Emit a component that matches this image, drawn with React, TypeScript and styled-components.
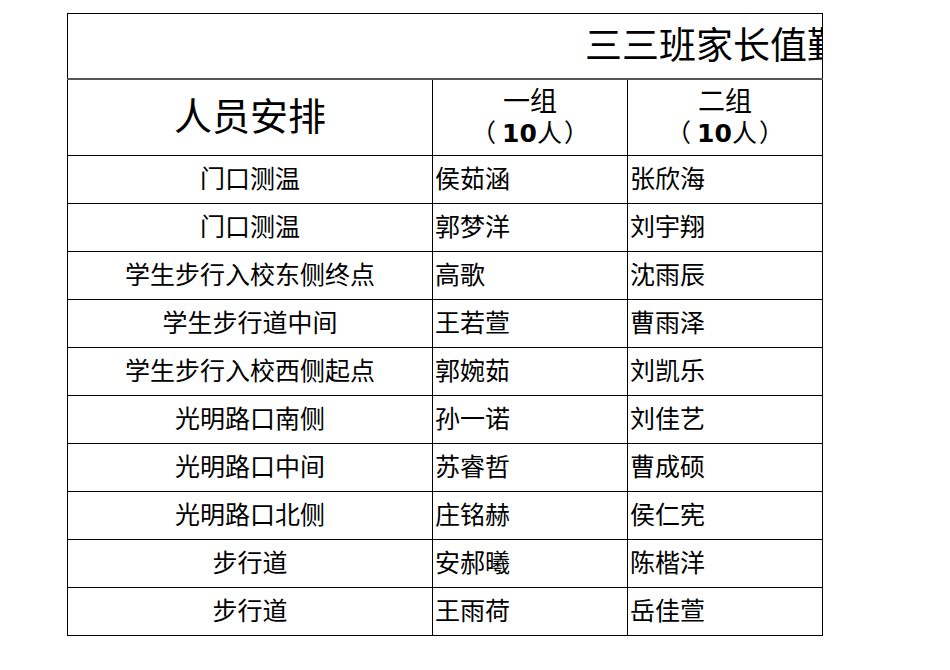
import React from 'react';
import styled, { createGlobalStyle } from 'styled-components';

const GlobalStyle = createGlobalStyle`
  html, body {
    margin: 0;
    padding: 0;
    background: #ffffff;
  }
  body {
    font-family: "DejaVu Sans", "Noto Sans CJK SC", sans-serif;
    color: #000;
  }
`;

const Page = styled.div`
  padding: 13px 0 0 67px;
`;

const Sheet = styled.table`
  border-collapse: collapse;
  table-layout: fixed;
  width: 756px;
`;

const TitleCell = styled.td`
  height: 62px;
  padding: 0;
  border: 1px solid #000;
  border-bottom: 2px solid #555;
  overflow: hidden;
`;

const TitleText = styled.div`
  width: 754px;
  overflow: hidden;
  white-space: nowrap;
  padding-left: 517px;
  box-sizing: border-box;
  font-size: 37px;
  line-height: 62px;
  padding-top: 2px;
`;

const HeadCell = styled.td<{ $big?: boolean }>`
  height: 75px;
  padding: 0;
  border: 1px solid #000;
  text-align: center;
  vertical-align: middle;
  font-size: ${p => (p.$big ? '38px' : '27px')};
  line-height: ${p => (p.$big ? '1.1' : '31px')};
`;

const Count = styled.span`
  font-size: 25px;
  b {
    font-weight: 700;
  }
`;

const OpenParen = styled.span`
  display: inline-block;
  margin-right: 6px;
`;

const CloseParen = styled.span`
  display: inline-block;
  margin-left: 2px;
`;

const Cell = styled.td<{ $center?: boolean }>`
  height: 47px;
  padding: 0 0 0 ${p => (p.$center ? '0' : '2px')};
  border: 1px solid #000;
  text-align: ${p => (p.$center ? 'center' : 'left')};
  vertical-align: middle;
  font-size: 25px;
  line-height: 47px;
  white-space: nowrap;
  overflow: hidden;
`;

const rows: [string, string, string][] = [
  ['门口测温', '侯茹涵', '张欣海'],
  ['门口测温', '郭梦洋', '刘宇翔'],
  ['学生步行入校东侧终点', '高歌', '沈雨辰'],
  ['学生步行道中间', '王若萱', '曹雨泽'],
  ['学生步行入校西侧起点', '郭婉茹', '刘凯乐'],
  ['光明路口南侧', '孙一诺', '刘佳艺'],
  ['光明路口中间', '苏睿哲', '曹成硕'],
  ['光明路口北侧', '庄铭赫', '侯仁宪'],
  ['步行道', '安郝曦', '陈楷洋'],
  ['步行道', '王雨荷', '岳佳萱'],
];

const GroupHead = ({ name }: { name: string }) => (
  <HeadCell>
    {name}
    <br />
    <Count>
      <OpenParen>（</OpenParen>
      <b>10</b>人<CloseParen>）</CloseParen>
    </Count>
  </HeadCell>
);

export default function App() {
  return (
    <Page>
      <GlobalStyle />
      <Sheet>
        <colgroup>
          <col style={{ width: 365 }} />
          <col style={{ width: 195 }} />
          <col style={{ width: 195 }} />
        </colgroup>
        <tbody>
          <tr>
            <TitleCell colSpan={3}>
              <TitleText>三三班家长值勤安排表</TitleText>
            </TitleCell>
          </tr>
          <tr>
            <HeadCell $big>人员安排</HeadCell>
            <GroupHead name="一组" />
            <GroupHead name="二组" />
          </tr>
          {rows.map((r, i) => (
            <tr key={i}>
              <Cell $center>{r[0]}</Cell>
              <Cell>{r[1]}</Cell>
              <Cell>{r[2]}</Cell>
            </tr>
          ))}
        </tbody>
      </Sheet>
    </Page>
  );
}
